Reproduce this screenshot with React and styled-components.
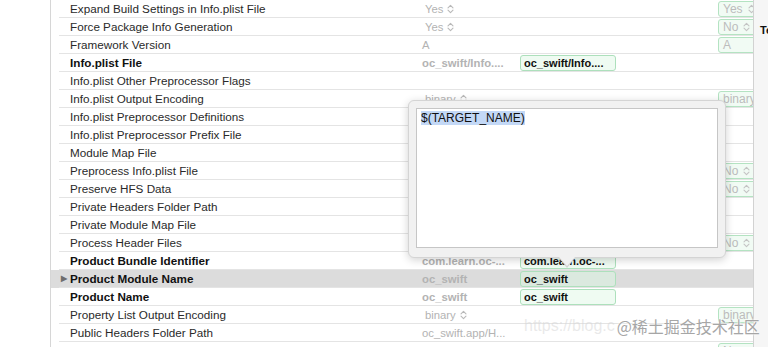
import styled, { createGlobalStyle } from 'styled-components'

const GlobalStyle = createGlobalStyle`
  body {
    margin: 0;
    background: #ffffff;
    font-family: 'Liberation Sans', Arial, sans-serif;
  }
`

const rows = [
  { name: 'Expand Build Settings in Info.plist File', resolved: 'Yes', resolvedPopup: true, level: { text: 'Yes', popup: true } },
  { name: 'Force Package Info Generation', resolved: 'Yes', resolvedPopup: true, level: { text: 'No', popup: true } },
  { name: 'Framework Version', resolved: 'A', level: { text: 'A' } },
  { name: 'Info.plist File', bold: true, resolved: 'oc_swift/Info....', target: 'oc_swift/Info....' },
  { name: 'Info.plist Other Preprocessor Flags' },
  { name: 'Info.plist Output Encoding', resolved: 'binary', resolvedPopup: true, level: { text: 'binary' } },
  { name: 'Info.plist Preprocessor Definitions' },
  { name: 'Info.plist Preprocessor Prefix File' },
  { name: 'Module Map File' },
  { name: 'Preprocess Info.plist File', level: { text: 'No', popup: true } },
  { name: 'Preserve HFS Data', level: { text: 'No', popup: true } },
  { name: 'Private Headers Folder Path' },
  { name: 'Private Module Map File' },
  { name: 'Process Header Files', level: { text: 'No', popup: true } },
  { name: 'Product Bundle Identifier', bold: true, resolved: 'com.learn.oc-...', target: 'com.learn.oc-...' },
  { name: 'Product Module Name', bold: true, selected: true, disclosure: true, resolved: 'oc_swift', target: 'oc_swift' },
  { name: 'Product Name', bold: true, resolved: 'oc_swift', target: 'oc_swift' },
  { name: 'Property List Output Encoding', resolved: 'binary', resolvedPopup: true, level: { text: 'binary' } },
  { name: 'Public Headers Folder Path', resolved: 'oc_swift.app/H...' },
  { name: 'Reexported Framework Names', level: { text: 'No' } },
]

const UpDown = ({ color = '#b9b9b9' }) => (
  <svg width='7' height='10' viewBox='0 0 7 10' fill='none' stroke={color} strokeWidth='1.1' strokeLinecap='round' strokeLinejoin='round'>
    <path d='M1 3.8 L3.5 1.3 L6 3.8' />
    <path d='M1 6.2 L3.5 8.7 L6 6.2' />
  </svg>
)

const App = () => {
  return (
    <>
      <GlobalStyle />
      <Page>
        <Gutter />
        <Table>
          <RowList>
            {rows.map((row) => (
              <Row key={row.name} $selected={row.selected}>
                <Lead />
                <Cells>
                  <NameCell $bold={row.bold}>
                    <Disclosure>{row.disclosure ? '▶' : ''}</Disclosure>
                    {row.name}
                  </NameCell>
                  <ResolvedCell $bold={row.bold} $popup={row.resolvedPopup}>
                    {row.resolved}
                    {row.resolvedPopup && <UpDown />}
                  </ResolvedCell>
                  <TargetCell>
                    {row.target && <ValueBox $selected={row.selected}>{row.target}</ValueBox>}
                  </TargetCell>
                  <LevelCell>
                    {row.level && (
                      <LevelBox>
                        {row.level.text}
                        {row.level.popup && <UpDown color='#c4c4c4' />}
                      </LevelBox>
                    )}
                  </LevelCell>
                </Cells>
              </Row>
            ))}
          </RowList>

          <Popover>
            <Editor>
              <Selected>$(TARGET_NAME)</Selected>
            </Editor>
          </Popover>
        </Table>
        <Inspector>Text</Inspector>
      </Page>
      <Watermark>
        <WatermarkUrl>https://blog.c</WatermarkUrl>
        <WatermarkMark>@稀土掘金技术社区</WatermarkMark>
      </Watermark>
    </>
  )
}

export default App

const Page = styled.div`
  position: relative;
  display: flex;
  width: 768px;
  height: 347px;
  overflow: hidden;
`

const Gutter = styled.div`
  flex: 0 0 50px;
  border-right: 1px solid #d6d6d6;
`

const Table = styled.div`
  position: relative;
  flex: 0 0 702px;
  overflow: hidden;
`

const RowList = styled.div`
  display: flex;
  flex-direction: column;
`

const Row = styled.div`
  display: flex;
  flex: 0 0 18px;
  height: 18px;
  background: ${(p) => (p.$selected ? '#dcdcdc' : 'transparent')};
`

const Lead = styled.div`
  flex: 0 0 8px;
`

const Cells = styled.div`
  flex: 1;
  display: grid;
  grid-template-columns: 359px 98px 200px 1fr;
  align-items: center;
  box-sizing: border-box;
  border-bottom: 1px solid #e4e4e4;
  font-size: 11px;
  white-space: nowrap;
`

const NameCell = styled.div`
  display: flex;
  align-items: center;
  padding-left: 2px;
  font-size: 11.7px;
  color: ${(p) => (p.$bold ? '#111111' : '#2a2a2a')};
  font-weight: ${(p) => (p.$bold ? 700 : 400)};
`

const Disclosure = styled.span`
  flex: 0 0 9px;
  font-size: 8px;
  color: #6e6e6e;
`

const ResolvedCell = styled.div`
  display: flex;
  align-items: center;
  gap: 4px;
  padding-left: ${(p) => (p.$popup ? 7 : 4)}px;
  font-size: 11.3px;
  color: #b3b3b3;
  font-weight: ${(p) => (p.$bold ? 700 : 400)};
`

const TargetCell = styled.div`
  padding-left: 4px;
`

const ValueBox = styled.div`
  box-sizing: border-box;
  width: 96px;
  height: 16px;
  display: flex;
  align-items: center;
  padding-left: 3px;
  border: 1px solid #ade0bc;
  border-radius: 3px;
  background: ${(p) => (p.$selected ? '#dbe9df' : '#effbf2')};
  color: #111111;
  font-weight: 700;
`

const LevelCell = styled.div`
  padding-left: 2px;
`

const LevelBox = styled.div`
  box-sizing: border-box;
  width: 60px;
  height: 16px;
  display: flex;
  align-items: center;
  gap: 5px;
  padding-left: 4px;
  border: 1px solid #b4e3c2;
  border-radius: 3px;
  background: #f1fbf4;
  color: #bcbcbc;
  font-size: 12px;
`

const Popover = styled.div`
  position: absolute;
  left: 357px;
  top: 100px;
  box-sizing: border-box;
  width: 318px;
  height: 158px;
  padding: 7px 7px 9px;
  background: #f1f1f1;
  border: 1px solid #d4d4d4;
  border-radius: 6px;
  box-shadow: 0 2px 8px rgba(0, 0, 0, 0.18);

  &::before,
  &::after {
    content: '';
    position: absolute;
    left: 150px;
    border-left: 8px solid transparent;
    border-right: 8px solid transparent;
  }
  &::before {
    bottom: -11px;
    border-top: 10px solid #d4d4d4;
  }
  &::after {
    bottom: -9px;
    border-top: 9px solid #f1f1f1;
  }
`

const Editor = styled.div`
  box-sizing: border-box;
  height: 100%;
  padding: 2px 4px;
  background: #ffffff;
  border: 1px solid #c6c6c6;
  font-size: 12px;
  color: #111111;
`

const Selected = styled.span`
  background: #c3d8f6;
`

const Inspector = styled.div`
  flex: 1;
  border-left: 1px solid #d2d2d2;
  background: #f6f6f6;
  padding: 24px 0 0 6px;
  font-size: 11px;
  font-weight: 700;
  color: #111111;
  white-space: nowrap;
  overflow: hidden;
`

const Watermark = styled.div`
  position: absolute;
  left: 524px;
  top: 314px;
  display: flex;
  align-items: center;
  gap: 2px;
  white-space: nowrap;
`

const WatermarkUrl = styled.span`
  font-size: 16px;
  color: rgba(215, 215, 215, 0.55);
`

const WatermarkMark = styled.span`
  font-family: 'Noto Sans CJK SC', sans-serif;
  font-size: 16px;
  color: #a6a6a6;
  text-shadow: 0 0 2px #ffffff, 0 0 2px #ffffff;
`
